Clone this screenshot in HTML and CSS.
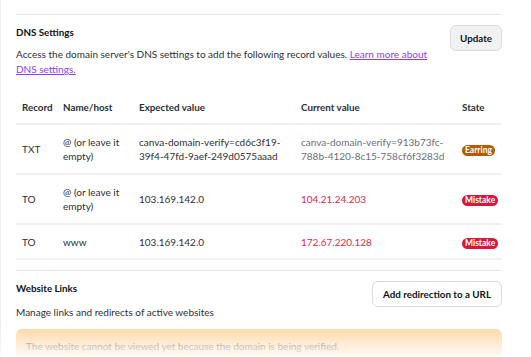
FILE: index.html
```html
<!DOCTYPE html>
<html lang="en">
<head>
  <meta charset="UTF-8">
  <meta name="viewport" content="width=device-width, initial-scale=1.0">
  <title>Domain settings</title>
  <link rel="stylesheet" href="styles.css">
</head>

<body>

  <div class="panel">
    <section class="section dns">
      <div class="section-head">
        <div class="section-text">
          <h2>DNS Settings</h2>
          <p>Access the domain server's DNS settings to add the following record values. <a href="#">Learn more about DNS settings.</a></p>
        </div>
        <button class="btn btn-gray">Update</button>
      </div>

      <table class="records">
        <thead>
          <tr>
            <th class="col-type">Record</th>
            <th class="col-host">Name/host</th>
            <th class="col-exp">Expected value</th>
            <th class="col-cur">Current value</th>
            <th class="col-state">State</th>
          </tr>
        </thead>
        <tbody>
          <tr>
            <td>TXT</td>
            <td>@ (or leave it empty)</td>
            <td>canva-domain-verify=cd6c3f19-39f4-47fd-9aef-249d0575aaad</td>
            <td class="cur muted">canva-domain-verify=913b73fc-788b-4120-8c15-758cf6f3283d</td>
            <td><span class="badge badge-warn">Earring</span></td>
          </tr>
          <tr>
            <td>TO</td>
            <td>@ (or leave it empty)</td>
            <td>103.169.142.0</td>
            <td class="cur bad">104.21.24.203</td>
            <td><span class="badge badge-bad">Mistake</span></td>
          </tr>
          <tr>
            <td>TO</td>
            <td>www</td>
            <td>103.169.142.0</td>
            <td class="cur bad">172.67.220.128</td>
            <td><span class="badge badge-bad">Mistake</span></td>
          </tr>
        </tbody>
      </table>
    </section>

    <section class="section links">
      <div class="section-head">
        <div class="section-text">
          <h2>Website Links</h2>
          <p>Manage links and redirects of active websites</p>
        </div>
        <button class="btn btn-white">Add redirection to a URL</button>
      </div>
      <div class="notice">The website cannot be viewed yet because the domain is being verified.</div>
    </section>
  </div>

</body>
</html>
```

FILE: styles.css
```css
* {
  margin: 0;
  padding: 0;
  box-sizing: border-box;
  font-family: 'Lato', sans-serif;
}

body {
  background: #fff;
  color: #0e1318;
  height: 357px;
  overflow: hidden;
  border-left: 1px solid #ececec;
}

/* soft fade at the bottom of the scroll area */
body::after {
  content: '';
  position: fixed;
  left: 0;
  right: 0;
  bottom: 0;
  height: 30px;
  pointer-events: none;
  background: linear-gradient(rgba(255, 255, 255, 0), rgba(255, 255, 255, 0.9));
}

.panel {
  padding: 14px 29px 0 15px;
}

.section {
  border-top: 1px solid #e6e6e9;
}

.section-head {
  display: flex;
  justify-content: space-between;
  align-items: flex-start;
  gap: 20px;
  padding-top: 9px;
}

.section-text {
  flex: 1;
}

h2 {
  font-size: 9.8px;
  font-weight: 700;
  line-height: 16px;
  margin-bottom: 7px;
}

.links h2 {
  margin-bottom: 9px;
}

.section-text p {
  font-size: 10px;
  line-height: 15px;
  color: #2b2f35;
}

.section-text a {
  color: #8b3dff;
  text-decoration: underline;
}

.btn {
  font-size: 9.8px;
  font-weight: 700;
  color: #0e1318;
  border-radius: 6px;
  height: 26px;
  padding: 0 9px;
  margin-top: 1px;
  cursor: pointer;
  white-space: nowrap;
}

.btn-gray {
  background: #f1f2f4;
  border: 1px solid #d9dbe0;
}

.btn-white {
  background: #fff;
  border: 1px solid #d9dbe0;
  padding: 0 10px;
}

.records {
  width: 100%;
  margin-top: 14px;
  margin-bottom: 10px;
  border-collapse: collapse;
  table-layout: fixed;
}

.records th,
.records td {
  text-align: left;
  padding: 0 2px 0 6px;
  vertical-align: middle;
}

.records th {
  font-size: 9.8px;
  font-weight: 700;
  color: #2b2f35;
  height: 33px;
  border-bottom: 2px solid #f1f1f3;
}

.records td {
  font-size: 10px;
  line-height: 14px;
  color: #2b2f35;
  height: 50px;
  border-bottom: 2px solid #f1f1f3;
  overflow-wrap: anywhere;
}

.records tbody tr:last-child td {
  height: 35px;
}

.col-type { width: 41px; }
.col-host { width: 76px; }
.col-exp { width: 162px; }
.col-cur { width: 161px; }
.col-state { width: 46px; }

.records td.muted {
  color: #6c6f75;
}

.records td.bad {
  color: #e0294a;
}

.badge {
  display: inline-block;
  font-size: 8.5px;
  font-weight: 700;
  color: #fff;
  line-height: 11px;
  padding: 0 3px;
  border-radius: 6px;
  white-space: nowrap;
}

.badge-warn {
  background: #b25c04;
}

.badge-bad {
  background: #d8173a;
}

.notice {
  margin-top: 9px;
  background: #fdd8a8;
  border-radius: 6px;
  padding: 11px 10px 14px;
  font-size: 10px;
  color: #6b6b6b;
}
```
